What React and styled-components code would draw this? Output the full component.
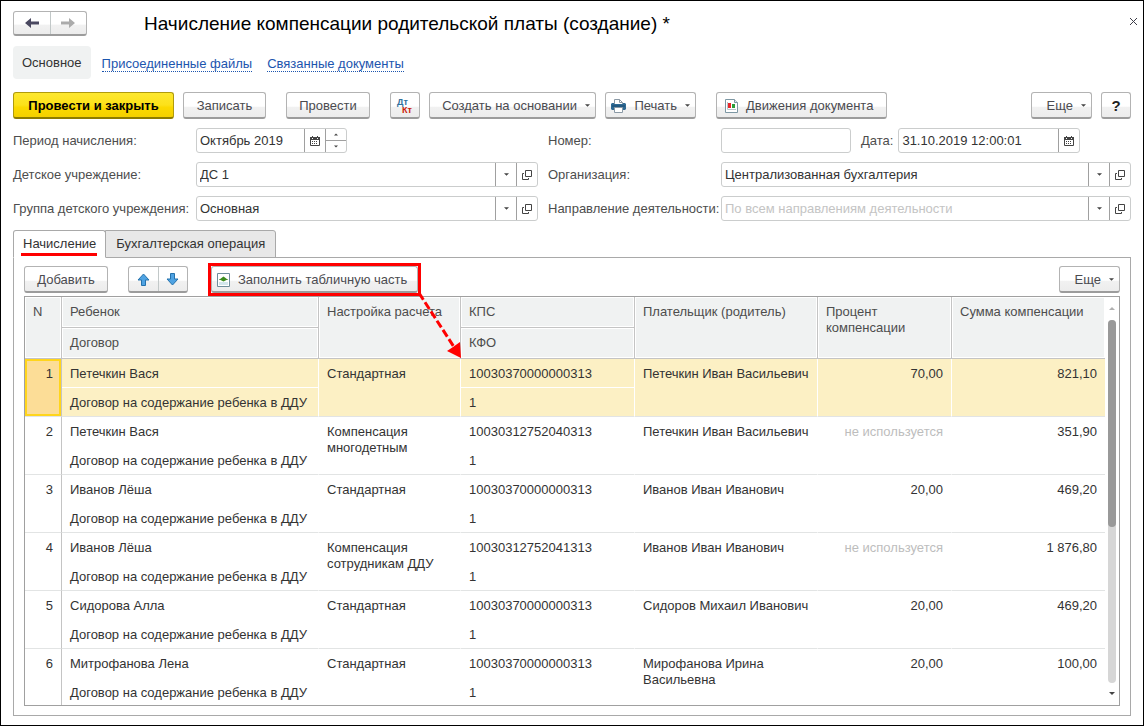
import React, { useState } from 'react'
import styled, { createGlobalStyle, css } from 'styled-components'

const ROWS = [
  { n: 1, child: 'Петечкин Вася', setup: 'Стандартная', kps: '10030370000000313', payer: 'Петечкин Иван Васильевич', percent: '70,00', sum: '821,10' },
  { n: 2, child: 'Петечкин Вася', setup: 'Компенсация многодетным', kps: '10030312752040313', payer: 'Петечкин Иван Васильевич', percent: null, sum: '351,90' },
  { n: 3, child: 'Иванов Лёша', setup: 'Стандартная', kps: '10030370000000313', payer: 'Иванов Иван Иванович', percent: '20,00', sum: '469,20' },
  { n: 4, child: 'Иванов Лёша', setup: 'Компенсация сотрудникам ДДУ', kps: '10030312752041313', payer: 'Иванов Иван Иванович', percent: null, sum: '1 876,80' },
  { n: 5, child: 'Сидорова Алла', setup: 'Стандартная', kps: '10030370000000313', payer: 'Сидоров Михаил Иванович', percent: '20,00', sum: '469,20' },
  { n: 6, child: 'Митрофанова Лена', setup: 'Стандартная', kps: '10030370000000313', payer: 'Мирофанова Ирина Васильевна', percent: '20,00', sum: '100,00' },
]

const CONTRACT = 'Договор на содержание ребенка в ДДУ'

const GlobalStyle = createGlobalStyle`
  * {
    box-sizing: border-box;
  }

  body {
    margin: 0;
    background: #fff;
  }

  body, button, input {
    font-family: "Liberation Sans", Arial, sans-serif;
    font-size: 13px;
    line-height: 16px;
    color: #333;
  }
`

const Window = styled.div`
  display: flex;
  flex-direction: column;
  height: 100vh;
  border: 1px solid #000;
  background: #fff;
`

const Header = styled.header`
  display: flex;
  align-items: center;
  padding: 10px 5px 0 12px;
`

const buttonFace = css`
  border: 1px solid #b3b3b3;
  border-bottom: 2px solid #9c9c9c;
  border-radius: 3px;
  background: linear-gradient(#fff 0%, #fff 55%, #f1f1f1 60%, #ececec 100%);
`

const ButtonPair = styled.div`
  ${buttonFace}
  display: flex;
  width: ${({ $width }) => $width}px;
  height: ${({ $height }) => $height}px;
`

const PairButton = styled.button`
  flex: 1;
  display: flex;
  align-items: center;
  justify-content: center;
  padding: 0;
  border: 0;
  background: none;

  & + & {
    border-left: 1px solid #c2c8c8;
  }
`

const Title = styled.h1`
  flex: 1;
  margin: 0 0 0 57px;
  padding-top: 1px;
  font-size: 19px;
  line-height: 24px;
  font-weight: normal;
  color: #000;
`

const CloseButton = styled.button`
  display: flex;
  align-self: flex-start;
  padding: 6px 0 0;
  border: 0;
  background: none;
`

const Sections = styled.nav`
  display: flex;
  align-items: center;
  padding: 10px 12px 0;
`

const CurrentSection = styled.a`
  padding: 9px 9px 8px;
  margin-right: 11px;
  border-radius: 4px;
  background: #f0f2f2;
  color: #333;
  text-decoration: none;
`

const SectionLink = styled.a`
  margin: 2px 15px 0 0;
  border-bottom: 1px dotted #1c55ae;
  color: #1c55ae;
  line-height: 15px;
  text-decoration: none;
`

const Toolbar = styled.div`
  display: flex;
  gap: 20px;
  padding: 13px 12px 0;
`

const ButtonGroup = styled.div`
  display: flex;
  gap: 9px;
  margin-left: ${({ $end }) => ($end ? 'auto' : '0')};
`

const Button = styled.button`
  ${buttonFace}
  display: flex;
  align-items: center;
  justify-content: center;
  gap: 8px;
  width: ${({ $width }) => $width}px;
  height: 27px;
  padding: 1px 0 0;
  color: #4b4b50;
  white-space: nowrap;
`

const IconButton = styled(Button)`
  justify-content: flex-start;
  padding-left: ${({ $tight }) => ($tight ? '5px' : '8px')};
`

const MenuButton = styled(Button)`
  justify-content: flex-end;
  padding-right: 5px;
`

const PrimaryButton = styled(Button)`
  border-color: #b09b0c;
  border-bottom-color: #8d7b00;
  background: linear-gradient(#fde82f 0%, #fce11a 50%, #fbd900 60%, #f4d000 100%);
  color: #000;
  font-weight: bold;
`

const HelpButton = styled(Button)`
  color: #222;
  font-size: 15px;
  font-weight: bold;
`

const Form = styled.form`
  display: grid;
  grid-template-columns: 183px minmax(0, 342fr) 183px minmax(0, 410fr);
  row-gap: 9px;
  align-items: center;
  padding: 9px 12px 0;
`

const Label = styled.label`
  color: #4d4d4d;
  white-space: nowrap;
  padding-left: ${({ $second }) => ($second ? '10px' : '0')};
`

const FieldLine = styled.div`
  display: flex;
  align-items: center;
  gap: 10px;
`

const DateGroup = styled.div`
  display: flex;
  align-items: center;
  gap: 5px;
`

const Field = styled.div`
  display: flex;
  width: ${({ $width }) => ($width ? `${$width}px` : '100%')};
  height: 25px;
  border: 1px solid #cbcdcd;
  border-radius: 3px;
  background: #fff;
  overflow: hidden;
`

const TextInput = styled.input`
  flex: 1;
  min-width: 0;
  padding: 0 3px;
  border: 0;
  outline: 0;
  background: none;

  &::placeholder {
    color: #c4c4c4;
    opacity: 1;
  }
`

const FieldButton = styled.button`
  display: flex;
  align-items: center;
  justify-content: center;
  width: 21px;
  padding: 0;
  border: 0;
  border-left: 1px solid #a0a0a0;
  background: none;
`

const Spinner = styled.div`
  display: flex;
  flex-direction: column;
  width: 21px;
  border-left: 1px solid #a0a0a0;
`

const SpinButton = styled.button`
  flex: 1;
  display: flex;
  align-items: center;
  justify-content: center;
  padding: 0;
  border: 0;
  background: none;

  & + & {
    border-top: 1px solid #a0a0a0;
  }
`

const Tabs = styled.div`
  display: flex;
  padding: 9px 12px 0;
`

const Tab = styled.button`
  height: 28px;
  padding: 0 9px;
  border: 1px solid #a9a9a9;
  border-radius: 3px 3px 0 0;
  background: #e8e8e8;
  color: #333;

  & + & {
    padding: 0 10px;
    margin-left: -1px;
    border-radius: 0 3px 0 0;
  }

  ${({ $active }) => $active && css`
    position: relative;
    border-bottom-color: #fff;
    background: #fff;

    &::after {
      content: '';
      position: absolute;
      left: 7px;
      right: 8px;
      bottom: 1px;
      height: 3px;
      background: #f00;
    }
  `}
`

const Panel = styled.section`
  flex: 1;
  display: flex;
  flex-direction: column;
  min-height: 0;
  margin: -1px 12px 9px;
  padding: 8px 10px 9px;
  border: 1px solid #a9a9a9;
`

const PanelToolbar = styled.div`
  display: flex;
  gap: 20px;
  margin-bottom: 3px;
`

const Highlight = styled.div`
  position: relative;
  z-index: 1;
  margin: -3px 0;
  border: 3px solid #f00;
`

const Arrow = styled.svg`
  position: absolute;
  left: 100%;
  top: 100%;
`

const Spacer = styled.div`
  flex: 1;
`

const Grid = styled.div`
  flex: 1;
  display: flex;
  min-height: 0;
  border: 1px solid #a0a0a0;
`

const GridBody = styled.div`
  flex: 1;
  min-width: 0;
  overflow: hidden;
`

const Table = styled.table`
  width: 100%;
  table-layout: fixed;
  border-collapse: separate;
  border-spacing: 0;
`

const Col = styled.col`
  width: ${({ $width }) => $width}px;
`

const HeadCell = styled.th`
  height: 31px;
  padding: 7px 8px 0;
  border-right: 1px solid #c4c4c4;
  border-bottom: 1px solid #c4c4c4;
  background: #f0f2f2;
  box-shadow: inset 0 0 0 1px #fff;
  color: #4d4d4d;
  font-weight: normal;
  text-align: left;
  vertical-align: top;
`

const LastHeadCell = styled(HeadCell)`
  border-right: 0;
`

const Cell = styled.td`
  height: 29px;
  padding: 7px 8px 0;
  border-right: 1px solid #fff;
  border-bottom: 1px solid ${({ $inner }) => ($inner ? '#fff' : '#e2e4e4')};
  text-align: ${({ $right }) => ($right ? 'right' : 'left')};
  vertical-align: top;
  color: ${({ $muted }) => ($muted ? '#bdbdbd' : '#333')};
`

const SumCell = styled(Cell)`
  border-right: 0;
`

const NumberCell = styled(Cell)`
  border-right-color: #c4c4c4;
  text-align: right;
`

const RecordRow = styled.tr`
  ${({ $selected }) => $selected && css`
    ${Cell} {
      background: #fcf0c4;
    }

    ${NumberCell} {
      background: #fcdd97;
      box-shadow: inset 0 0 0 2px #ffd51c;
    }
  `}
`

const ScrollBar = styled.div`
  display: flex;
  flex-direction: column;
  align-items: center;
  width: 14px;
  padding: 10px 0;
`

const ScrollTrack = styled.div`
  flex: 1;
  width: 8px;
  margin: 10px 0 9px;
  border-radius: 4px;
  background: #d6d6d6;
`

const ScrollThumb = styled.div`
  height: 57%;
  border-radius: 4px;
  background: #999;
`

function NavArrow({ forward }) {
  return (
    <svg width="16" height="12" viewBox="0 0 16 12" fill={forward ? '#ababab' : '#4a4860'} aria-hidden="true">
      {forward
        ? <path d="M15 6 9 1v3.500H1v3h8V11z" />
        : <path d="M1 6 7 1v3.500h8v3H7V11z" />}
    </svg>
  )
}

function Caret({ up, color = '#444', size = 5 }) {
  return (
    <svg width={size} height="3" viewBox="0 0 6 3" fill={color} aria-hidden="true">
      {up ? <path d="M0 3h6L3 0z" /> : <path d="M0 0h6L3 3z" />}
    </svg>
  )
}

function OpenIcon() {
  return (
    <svg width="10" height="10" viewBox="0 0 10 10" fill="none" stroke="#444" aria-hidden="true">
      <path d="M3.500 .5h6v6h-6zM2 3.500H.5v6h6V8" />
    </svg>
  )
}

function CalendarIcon() {
  return (
    <svg width="10" height="10" viewBox="0 0 10 10" aria-hidden="true">
      <path d="M.5 2v7.500h9V2" fill="#fff" stroke="#444" />
      <path d="M0 1h10v3H0zM2 0h1v1H2zM7 0h1v1H7z" fill="#444" />
      <path d="M2 2h1v1H2zM7 2h1v1H7z" fill="#fff" />
      <path d="M2 5h1v1H2zM4 5h1v1H4zM6 5h1v1H6zM2 7h1v1H2zM4 7h1v1H4zM6 7h1v1H6z" fill="#444" />
    </svg>
  )
}

function DebitCreditIcon() {
  return (
    <svg width="18" height="18" viewBox="0 0 18 18" fontSize="9" fontWeight="bold" aria-hidden="true">
      <text x="1" y="8" fill="#30709c">Дт</text>
      <text x="6" y="16" fill="#cb1b08">Кт</text>
    </svg>
  )
}

function PrinterIcon() {
  return (
    <svg width="15" height="14" viewBox="0 0 15 14" aria-hidden="true">
      <path d="M3.500 5V.5h5l3 3V5" fill="#fff" stroke="#8a99a5" />
      <path d="M8.500 .5v3h3" fill="none" stroke="#8a99a5" />
      <path d="M1 4h2v1h9V4h2l1 1v5l-1 1H1l-1-1V5z" fill="#2f6a94" />
      <path d="M1 7h13" stroke="#17496e" />
      <path d="M3.500 8.500h8v5h-8z" fill="#fff" stroke="#8a99a5" />
    </svg>
  )
}

function ReportIcon() {
  return (
    <svg width="13" height="14" viewBox="0 0 13 14" aria-hidden="true">
      <path d="M.5 .5h9l3 3v10H.5z" fill="#fff" stroke="#7d97a3" />
      <path d="M9.500 .5v3h3" fill="#dfe7ea" stroke="#7d97a3" />
      <path d="M2.500 3v7.500H11" fill="none" stroke="#b9c5ca" />
      <path d="M3 4h3v5H3z" fill="#e8262a" />
      <path d="M7 5h3v4H7z" fill="#2d9d3a" />
    </svg>
  )
}

function MoveIcon({ down }) {
  return (
    <svg width="13" height="13" viewBox="0 0 13 13" fill="#4fa3e3" stroke="#2572ac" strokeLinejoin="round" aria-hidden="true">
      {down
        ? <path d="M4.500 .5h4v5.500H12L6.500 12 1 6h3.500z" />
        : <path d="M4.500 12.500h4V7H12L6.500 1 1 7h3.500z" />}
    </svg>
  )
}

function FillIcon() {
  return (
    <svg width="13" height="14" viewBox="0 0 13 14" aria-hidden="true">
      <path d="M.5 .5h12v13H.5z" fill="#fff" stroke="#6f8d9b" />
      <path d="M2 9h9v3H2z" fill="#d3e6ec" />
      <path d="M2 6.500h9" stroke="#8fb48a" />
      <path d="M6.500 3.500 10.500 6.500 6.500 8.500 2.500 6.500z" fill="#3c8c1c" />
    </svg>
  )
}

function CloseIcon() {
  return (
    <svg width="9" height="9" viewBox="0 0 9 9" stroke="#3d3d48" aria-hidden="true">
      <path d="M1 1l7 7M8 1l-7 7" />
    </svg>
  )
}

function ChoiceField({ id, value, placeholder }) {
  const [text, setText] = useState(value)

  return (
    <Field>
      <TextInput id={id} value={text} placeholder={placeholder} onChange={e => setText(e.target.value)} />
      <FieldButton type="button" aria-label="Выбрать"><Caret /></FieldButton>
      <FieldButton type="button" aria-label="Открыть"><OpenIcon /></FieldButton>
    </Field>
  )
}

function Record({ row, selected }) {
  return (
    <>
      <RecordRow $selected={selected}>
        <NumberCell rowSpan={2}>{row.n}</NumberCell>
        <Cell $inner>{row.child}</Cell>
        <Cell rowSpan={2}>{row.setup}</Cell>
        <Cell $inner>{row.kps}</Cell>
        <Cell rowSpan={2}>{row.payer}</Cell>
        <Cell rowSpan={2} $right $muted={!row.percent}>{row.percent || 'не используется'}</Cell>
        <SumCell rowSpan={2} $right>{row.sum}</SumCell>
      </RecordRow>
      <RecordRow $selected={selected}>
        <Cell>{CONTRACT}</Cell>
        <Cell>1</Cell>
      </RecordRow>
    </>
  )
}

function App() {
  return (
    <Window>
      <GlobalStyle />
      <Header>
        <ButtonPair $width={74} $height={25}>
          <PairButton aria-label="Назад"><NavArrow /></PairButton>
          <PairButton aria-label="Вперед"><NavArrow forward /></PairButton>
        </ButtonPair>
        <Title>Начисление компенсации родительской платы (создание) *</Title>
        <CloseButton aria-label="Закрыть"><CloseIcon /></CloseButton>
      </Header>

      <Sections>
        <CurrentSection href="#main">Основное</CurrentSection>
        <SectionLink href="#files">Присоединенные файлы</SectionLink>
        <SectionLink href="#related">Связанные документы</SectionLink>
      </Sections>

      <Toolbar>
        <ButtonGroup>
          <PrimaryButton $width={161}>Провести и закрыть</PrimaryButton>
          <Button $width={83}>Записать</Button>
        </ButtonGroup>
        <Button $width={84}>Провести</Button>
        <ButtonGroup>
          <Button $width={30} aria-label="Дт Кт"><DebitCreditIcon /></Button>
          <MenuButton $width={167}>Создать на основании <Caret /></MenuButton>
          <MenuButton $width={91}><PrinterIcon />Печать <Caret /></MenuButton>
        </ButtonGroup>
        <IconButton $width={171}><ReportIcon />Движения документа</IconButton>
        <ButtonGroup $end>
          <MenuButton $width={61}>Еще <Caret /></MenuButton>
          <HelpButton $width={30}>?</HelpButton>
        </ButtonGroup>
      </Toolbar>

      <Form>
        <Label htmlFor="period">Период начисления:</Label>
        <Field $width={151}>
          <TextInput id="period" defaultValue="Октябрь 2019" />
          <FieldButton type="button" aria-label="Календарь"><CalendarIcon /></FieldButton>
          <Spinner>
            <SpinButton type="button" aria-label="Больше"><Caret up size={4} /></SpinButton>
            <SpinButton type="button" aria-label="Меньше"><Caret size={4} /></SpinButton>
          </Spinner>
        </Field>
        <Label $second htmlFor="number">Номер:</Label>
        <FieldLine>
          <Field $width={130}>
            <TextInput id="number" />
          </Field>
          <DateGroup>
            <Label htmlFor="date">Дата:</Label>
            <Field $width={182}>
              <TextInput id="date" defaultValue="31.10.2019 12:00:01" />
              <FieldButton type="button" aria-label="Календарь"><CalendarIcon /></FieldButton>
            </Field>
          </DateGroup>
        </FieldLine>

        <Label htmlFor="kindergarten">Детское учреждение:</Label>
        <ChoiceField id="kindergarten" value="ДС 1" />
        <Label $second htmlFor="organization">Организация:</Label>
        <ChoiceField id="organization" value="Централизованная бухгалтерия" />

        <Label htmlFor="group">Группа детского учреждения:</Label>
        <ChoiceField id="group" value="Основная" />
        <Label $second htmlFor="direction">Направление деятельности:</Label>
        <ChoiceField id="direction" value="" placeholder="По всем направлениям деятельности" />
      </Form>

      <Tabs role="tablist">
        <Tab role="tab" aria-selected="true" $active>Начисление</Tab>
        <Tab role="tab" aria-selected="false">Бухгалтерская операция</Tab>
      </Tabs>

      <Panel>
        <PanelToolbar>
          <Button $width={84}>Добавить</Button>
          <ButtonPair $width={60} $height={27}>
            <PairButton aria-label="Вверх"><MoveIcon /></PairButton>
            <PairButton aria-label="Вниз"><MoveIcon down /></PairButton>
          </ButtonPair>
          <Highlight>
            <IconButton $width={207} $tight><FillIcon />Заполнить табличную часть</IconButton>
            <Arrow width="46" height="68" viewBox="0 0 46 68" aria-hidden="true">
              <path d="M1 0 36 54" stroke="#f00" strokeWidth="3" strokeDasharray="8 3" />
              <path d="M43 65 29 58 35 54 42 49z" fill="#f00" />
            </Arrow>
          </Highlight>
          <Spacer />
          <MenuButton $width={61}>Еще <Caret /></MenuButton>
        </PanelToolbar>

        <Grid>
          <GridBody>
            <Table>
              <colgroup>
                <Col $width={37} />
                <Col $width={257} />
                <Col $width={142} />
                <Col $width={174} />
                <Col $width={183} />
                <Col $width={134} />
                <col />
              </colgroup>
              <thead>
                <tr>
                  <HeadCell rowSpan={2}>N</HeadCell>
                  <HeadCell>Ребенок</HeadCell>
                  <HeadCell rowSpan={2}>Настройка расчета</HeadCell>
                  <HeadCell>КПС</HeadCell>
                  <HeadCell rowSpan={2}>Плательщик (родитель)</HeadCell>
                  <HeadCell rowSpan={2}>Процент компенсации</HeadCell>
                  <LastHeadCell rowSpan={2}>Сумма компенсации</LastHeadCell>
                </tr>
                <tr>
                  <HeadCell>Договор</HeadCell>
                  <HeadCell>КФО</HeadCell>
                </tr>
              </thead>
              <tbody>
                {ROWS.map(row => (
                  <Record key={row.n} row={row} selected={row.n === 1} />
                ))}
              </tbody>
            </Table>
          </GridBody>
          <ScrollBar>
            <Caret up color="#b0b0b0" size={6} />
            <ScrollTrack>
              <ScrollThumb />
            </ScrollTrack>
            <Caret size={6} />
          </ScrollBar>
        </Grid>
      </Panel>
    </Window>
  )
}

export default App
